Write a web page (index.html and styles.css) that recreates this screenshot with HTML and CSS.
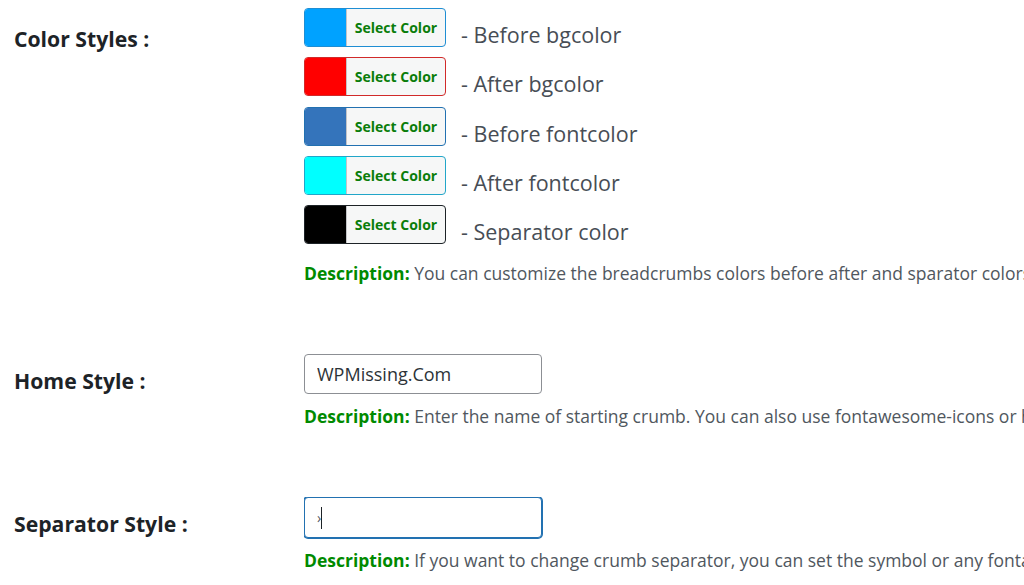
FILE: index.html
```html
<!DOCTYPE html>
<html lang="en">
<head>
<meta charset="utf-8">
<title>Breadcrumb Settings</title>
<link rel="stylesheet" href="styles.css">
</head>
<body>
<main class="form">
  <section class="row row-colors">
    <div class="label label-colors">Color Styles :</div>
    <div class="field">
      <div class="swatches">
        <div class="swatch-row">
          <button class="color-btn b1"><span class="chip c1"></span><span class="btn-text">Select Color</span></button>
          <span class="opt">- Before bgcolor</span>
        </div>
        <div class="swatch-row">
          <button class="color-btn b2"><span class="chip c2"></span><span class="btn-text">Select Color</span></button>
          <span class="opt">- After bgcolor</span>
        </div>
        <div class="swatch-row">
          <button class="color-btn b3"><span class="chip c3"></span><span class="btn-text">Select Color</span></button>
          <span class="opt">- Before fontcolor</span>
        </div>
        <div class="swatch-row">
          <button class="color-btn b4"><span class="chip c4"></span><span class="btn-text">Select Color</span></button>
          <span class="opt">- After fontcolor</span>
        </div>
        <div class="swatch-row">
          <button class="color-btn b5"><span class="chip c5"></span><span class="btn-text">Select Color</span></button>
          <span class="opt">- Separator color</span>
        </div>
      </div>
      <p class="desc desc-colors"><strong>Description:</strong> You can customize the breadcrumbs colors before after and sparator colors</p>
    </div>
  </section>

  <section class="row">
    <div class="label">Home Style :</div>
    <div class="field">
      <input class="text-input" type="text" value="WPMissing.Com">
      <p class="desc"><strong>Description:</strong> Enter the name of starting crumb. You can also use fontawesome-icons or html</p>
    </div>
  </section>

  <section class="row">
    <div class="label">Separator Style :</div>
    <div class="field">
      <div class="text-input focused"><span class="sep-val">›</span><span class="caret"></span></div>
      <p class="desc"><strong>Description:</strong> If you want to change crumb separator, you can set the symbol or any fontawesome icon</p>
    </div>
  </section>
</main>
</body>
</html>
```
FILE: styles.css
```css
html, body {
  margin: 0;
  padding: 0;
  background: #ffffff;
  overflow: hidden;
}
body {
  font-family: "Open Sans", "Noto Sans", sans-serif;
  color: #3c434a;
  width: 1024px;
  height: 585px;
}
.form {
  display: flex;
  flex-direction: column;
  gap: 70px;
  padding: 8px 0 0 14px;
}
.row {
  display: grid;
  grid-template-columns: 290px 1fr;
}
.label {
  font-size: 21.2px;
  font-weight: 700;
  color: #1d2327;
  line-height: 24px;
  padding-top: 15px;
  white-space: nowrap;
}
.label-colors {
  padding-top: 19px;
}
.field {
  min-width: 0;
  white-space: nowrap;
  overflow: hidden;
}
.swatches {
  display: flex;
  flex-direction: column;
  gap: 10.25px;
}
.swatch-row {
  display: flex;
  align-items: flex-start;
  gap: 15px;
  height: 39px;
}
.color-btn {
  display: flex;
  align-items: stretch;
  box-sizing: border-box;
  width: 142px;
  height: 39px;
  padding: 0;
  margin: 0;
  border: 1px solid #2271b1;
  border-radius: 4px;
  background: #f6f7f7;
  overflow: hidden;
  font-family: inherit;
  cursor: pointer;
}
.chip {
  width: 41px;
  flex: none;
  border-right: 1px solid #c3c4c7;
}
.btn-text {
  flex: 1;
  display: flex;
  align-items: center;
  justify-content: center;
  font-size: 14px;
  font-weight: 700;
  color: #0a7d0a;
}
.c1 { background: #00a2ff; }
.c2 { background: #ff0000; }
.c3 { background: #3474bb; }
.c4 { background: #00ffff; }
.c5 { background: #000000; }
.b1 { border-color: #1f8ed3; }
.b2 { border-color: #d12a2a; }
.b3 { border-color: #2271b1; }
.b4 { border-color: #22a6c9; }
.b5 { border-color: #1d2327; }
.opt {
  font-size: 21.5px;
  line-height: 20px;
  padding-top: 17px;
  color: #474d55;
}
.desc {
  margin: 11px 0 0;
  font-size: 17.5px;
  line-height: 22px;
  color: #50575e;
}
.desc-colors {
  margin-top: 18px;
}
.desc strong {
  color: #008a00;
  font-weight: 700;
}
.text-input {
  display: block;
  box-sizing: border-box;
  width: 238px;
  height: 40px;
  margin: 0;
  padding: 0 12px;
  border: 1px solid #8c8f94;
  border-radius: 4px;
  background: #ffffff;
  font-family: inherit;
  font-size: 18px;
  color: #2c3338;
  outline: none;
}
.text-input.focused {
  display: flex;
  align-items: center;
  height: 41px;
  border-color: #2271b1;
  box-shadow: 0 0 0 1px #2271b1;
}
.sep-val {
  font-size: 14px;
  color: #50575e;
}
.caret {
  display: inline-block;
  width: 1px;
  height: 22px;
  background: #1d2327;
}
```
